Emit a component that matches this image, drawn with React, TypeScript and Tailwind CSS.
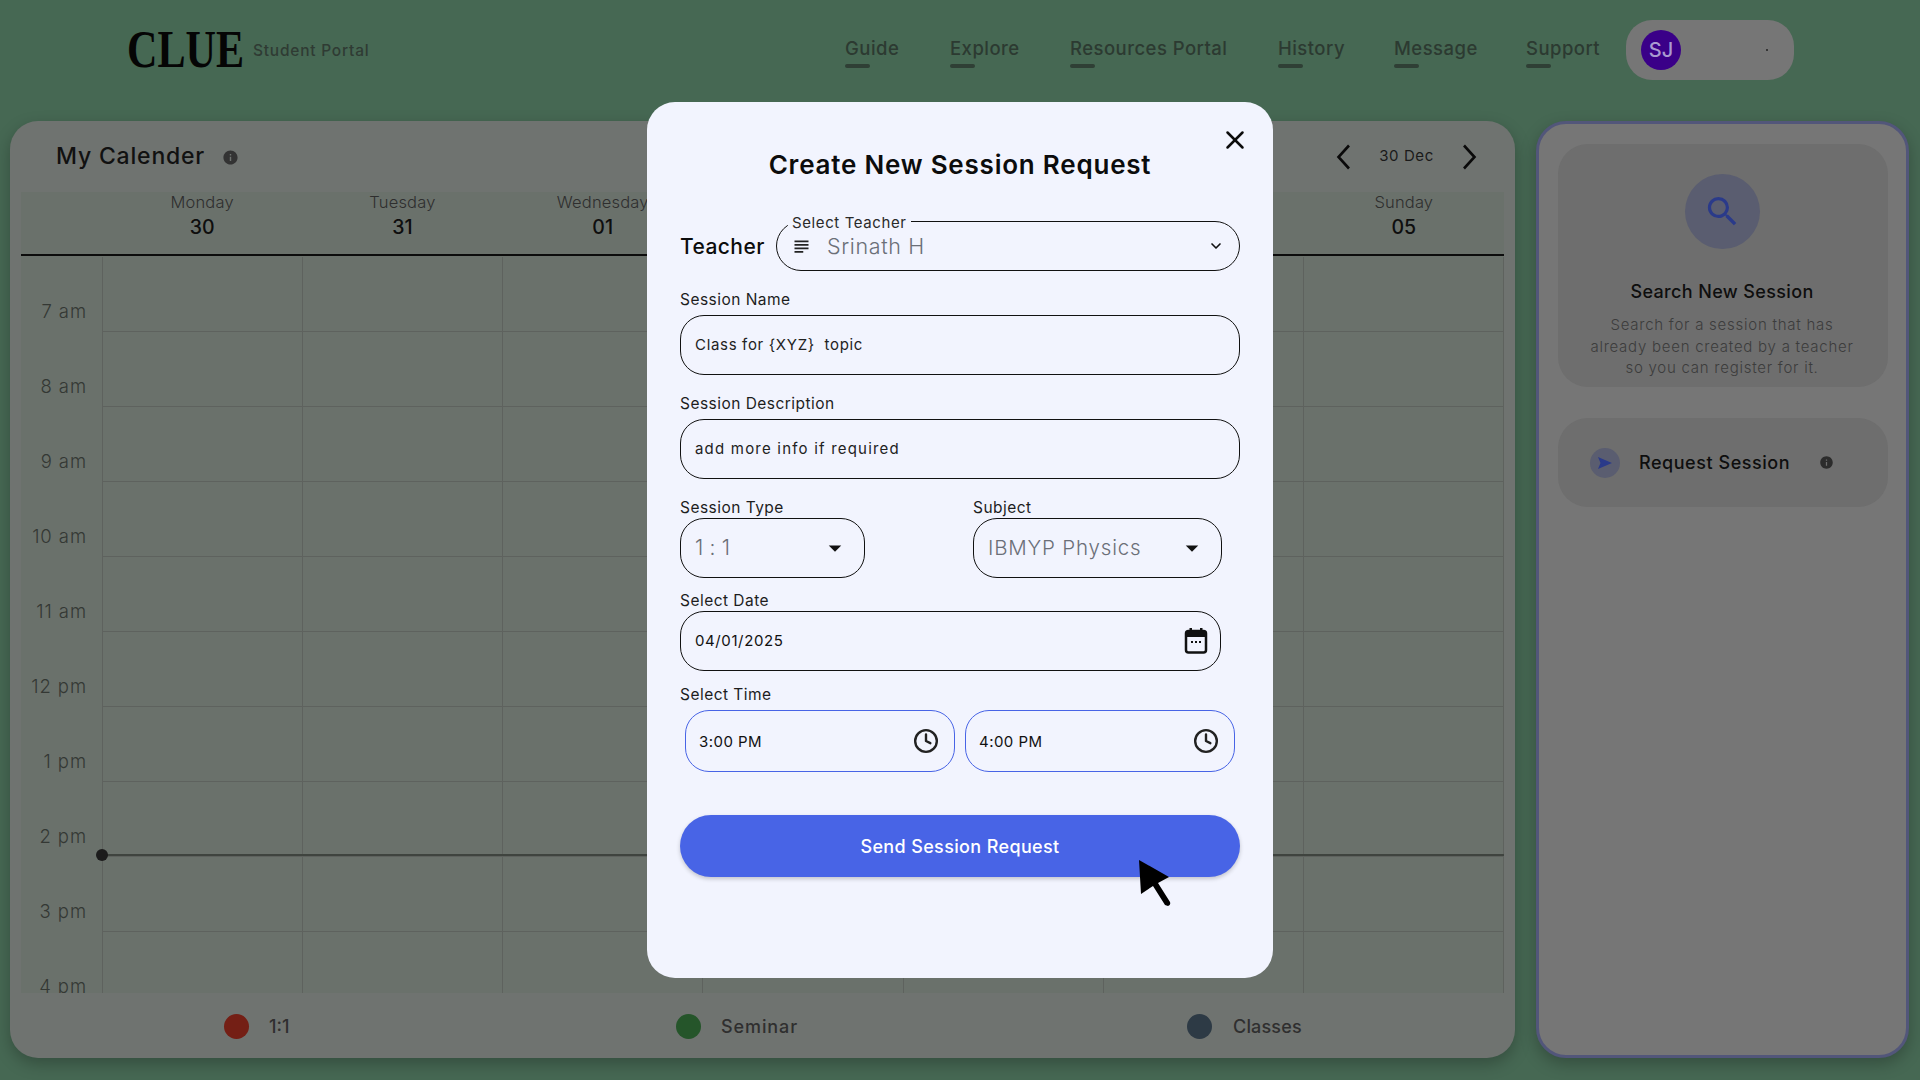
import React from "react";
import { X, ChevronDown, Clock } from "lucide-react";
import { MdInfo, MdSubject, MdArrowDropDown, MdSearch } from "react-icons/md";

const days = [["Monday", "30"], ["Tuesday", "31"], ["Wednesday", "01"], ["Thursday", "02"], ["Friday", "03"], ["Saturday", "04"], ["Sunday", "05"]];
const times = ["7 am", "8 am", "9 am", "10 am", "11 am", "12 pm", "1 pm", "2 pm", "3 pm", "4 pm"];
const nav: [string, string][] = [["Guide", "w-[105px]"], ["Explore", "w-[120px]"], ["Resources Portal", "w-[208px]"], ["History", "w-[116px]"], ["Message", "w-[132px]"], ["Support", "w-[100px]"]];

function Calendar() {
  return (
    <section className="relative w-[1505px] h-[937px] bg-[#6f7370] rounded-[28px] shadow-[0_6px_16px_rgba(0,0,0,0.25)] flex flex-col overflow-hidden">
      <div className="h-[71px] flex items-center pl-[46px] pr-[38px] shrink-0">
        <span className="text-[23px] font-medium text-[#111] tracking-[0.035em]">My Calender</span>
        <MdInfo className="ml-[17px] text-[#333] mt-[1px]" size={17} />
        <div className="ml-auto flex items-center w-[141px] justify-between">
          <svg width="15" height="26" viewBox="0 0 15 26" fill="none" stroke="#0a0a0a" strokeWidth="2.6"><path d="M13 1.5 L2.5 13 L13 24.5" /></svg>
          <span className="text-[15px] text-[#1a1a1a] tracking-[0.04em]">30 Dec</span>
          <svg width="15" height="26" viewBox="0 0 15 26" fill="none" stroke="#0a0a0a" strokeWidth="2.6"><path d="M2 1.5 L12.5 13 L2 24.5" /></svg>
        </div>
      </div>
      <div className="mx-[11px] w-[1483px] h-[801px] bg-[#6a716b] flex flex-col overflow-hidden shrink-0 relative">
        <div className="h-[64px] border-b-2 border-[#0c0c0c] flex pl-[81px] shrink-0">
          {days.map(([d, n]) => (
            <div key={d} className="flex-1 text-center -mt-[1px]">
              <div className="text-[16.5px] font-light text-[#2e2e2e] leading-[22px] tracking-[0.01em]">{d}</div>
              <div className="text-[19.5px] font-medium text-[#0e0e0e] leading-[26px] mt-[1px]">{n}</div>
            </div>
          ))}
        </div>
        <div className="mt-[1px] flex flex-col">
          {times.map((t) => (
            <div key={t} className="flex h-[75px] shrink-0">
              <div className="w-[81px] h-full flex items-center justify-end pt-[34px] text-[18.5px] font-light text-[#343834] tracking-[0.05em] whitespace-nowrap shrink-0 pr-[15px]">
                {t}
              </div>
              <div className="border-l border-[#5e625e] flex flex-1">
                {days.map(([d]) => (
                  <div key={d} className="flex-1 h-[75px] border-b border-r border-[#5e625e]" />
                ))}
              </div>
            </div>
          ))}
        </div>
        <div className="absolute left-[81px] right-0 top-[662px] h-[2px] bg-[#3f443f]" />
        <div className="absolute left-[75px] top-[657px] w-[12px] h-[12px] rounded-full bg-[#1c1c1c]" />
      </div>
      <div className="flex-1 flex items-center pt-[2px] text-[18px] text-[#2f2f2f]">
        <span className="ml-[214px] w-[25px] h-[25px] rounded-full bg-[#741f15]" />
        <span className="ml-[20px] w-[407px] font-medium">1:1</span>
        <span className="w-[25px] h-[25px] rounded-full bg-[#25552a]" />
        <span className="ml-[20px] w-[466px] font-medium tracking-[0.05em]">Seminar</span>
        <span className="w-[25px] h-[25px] rounded-full bg-[#2d3a45]" />
        <span className="ml-[21px] font-medium tracking-[0.01em]">Classes</span>
      </div>
    </section>
  );
}

function Sidebar() {
  return (
    <aside className="w-[373px] h-[937px] bg-[#767676] border-[3px] border-[#52567a] rounded-[30px] shadow-[0_6px_16px_rgba(0,0,0,0.25)] pl-[19px] pr-[18px] pt-[20px]">
      <div className="h-[243px] bg-[#6e6e6e] rounded-[30px] flex flex-col items-center pt-[30px]">
        <div className="mr-[2px] w-[75px] h-[75px] rounded-full bg-[#5a5d70] flex items-center justify-center">
          <MdSearch size={39} className="text-[#2a3a8a]" />
        </div>
        <div className="mr-[2px] mt-[30px] text-[18px] font-medium text-[#0e0e0e] tracking-[0.02em] leading-[26px]">Search New Session</div>
        <p className="mr-[2px] mt-[9px] w-[275px] text-center text-[15px] font-light text-[#3c3c3c] leading-[21.5px] tracking-[0.05em]">
          Search for a session that has already been created by a teacher so you can register for it.
        </p>
      </div>
      <div className="mt-[31px] h-[89px] bg-[#6e6e6e] rounded-[30px] flex items-center pl-[32px]">
        <div className="w-[30px] h-[30px] rounded-full bg-[#5a5d70] flex items-center justify-center">
          <svg width="14" height="12" viewBox="0 0 14 12"><path d="M0 0 L14 6 L0 12 L2.5 6 Z" fill="#2a3a8a" /></svg>
        </div>
        <span className="ml-[19px] text-[18px] font-medium text-[#0e0e0e] tracking-[0.03em]">Request Session</span>
        <MdInfo className="ml-[29px] text-[#2c2c2c]" size={15} />
      </div>
    </aside>
  );
}

function Label({ children, className = "" }: { children: React.ReactNode; className?: string }) {
  return <div className={`text-[15.5px] leading-[20px] text-[#1d1d1d] tracking-[0.03em] ${className}`}>{children}</div>;
}

function Field({ children, className = "" }: { children: React.ReactNode; className?: string }) {
  return <div className={`h-[60px] border border-[#111] rounded-[24px] flex items-center pl-[14px] ${className}`}>{children}</div>;
}

function Modal() {
  return (
    <div className="fixed inset-0 flex items-center justify-center">
      <div className="relative w-[626px] h-[876px] bg-[#f2f4fe] rounded-[28px] px-[33px] pt-[44px]">
        <X size={30} strokeWidth={2} className="absolute right-[23px] top-[23px] text-[#0c0c0c]" />
        <h2 className="text-center text-[26px] font-semibold text-[#0c0c0c] leading-[38px] tracking-[0.03em]">Create New Session Request</h2>
        <div className="mt-[37px] flex items-center h-[50px]">
          <span className="mt-[2px] text-[21px] font-medium text-[#0c0c0c] w-[96px] tracking-[0.02em]">Teacher</span>
          <div className="relative w-[464px] h-[50px] border border-[#111] rounded-[25px] flex items-center pl-[14px] pr-[15px]">
            <span className="absolute left-[11px] -top-[7px] h-[16px] flex items-center bg-[#f2f4fe] px-[4px] text-[15px] text-[#2a2a2a] tracking-[0.04em]">Select Teacher</span>
            <MdSubject size={21} className="text-[#222]" />
            <span className="ml-[15px] text-[21.5px] font-light text-[#6b6f78] tracking-[0.03em]">Srinath H</span>
            <ChevronDown size={16} strokeWidth={2.5} className="ml-auto text-[#111]" />
          </div>
        </div>
        <Label className="mt-[19px]">Session Name</Label>
        <Field className="w-[560px] mt-[5px]"><span className="text-[15px] text-[#222] tracking-[0.045em] whitespace-pre">Class for {"{XYZ}"}  topic</span></Field>
        <Label className="mt-[19px]">Session Description</Label>
        <Field className="w-[560px] mt-[5px]"><span className="text-[15px] text-[#222] tracking-[0.08em]">add more info if required</span></Field>
        <div className="mt-[19px] flex">
          <div className="w-[293px]">
            <Label>Session Type</Label>
            <Field className="w-[185px] mt-0 pr-[14px]">
              <span className="text-[21px] font-light text-[#6b6f78] tracking-[0.01em]">1 : 1</span>
              <MdArrowDropDown size={30} className="ml-auto text-[#111]" />
            </Field>
          </div>
          <div>
            <Label>Subject</Label>
            <Field className="w-[249px] mt-0 pr-[14px]">
              <span className="text-[20.5px] font-light text-[#6b6f78] tracking-[0.04em]">IBMYP Physics</span>
              <MdArrowDropDown size={30} className="ml-auto text-[#111]" />
            </Field>
          </div>
        </div>
        <Label className="mt-[13px]">Select Date</Label>
        <Field className="w-[541px] mt-0 pr-[12px]">
          <span className="text-[15px] text-[#111] tracking-[0.04em]">04/01/2025</span>
          <svg className="ml-auto" width="24" height="26" viewBox="0 0 24 26">
            <rect x="2" y="3" width="20" height="21.5" rx="2.5" fill="none" stroke="#111" strokeWidth="2.5" />
            <rect x="2" y="3" width="20" height="6" fill="#111" />
            <rect x="5.5" y="0" width="2.5" height="4" fill="#111" />
            <rect x="16" y="0" width="2.5" height="4" fill="#111" />
            <rect x="7" y="13" width="2" height="2" fill="#111" />
            <rect x="11" y="13" width="2" height="2" fill="#111" />
            <rect x="15" y="13" width="2" height="2" fill="#111" />
          </svg>
        </Field>
        <Label className="mt-[14px]">Select Time</Label>
        <div className="mt-[5px] ml-[5px] flex gap-[10px]">
          {["3:00 PM", "4:00 PM"].map((t) => (
            <div key={t} className="w-[270px] h-[62px] border border-[#4864e6] rounded-[24px] flex items-center pl-[13px] pr-[15px]">
              <span className="mt-[2px] text-[15px] text-[#111] tracking-[0.03em]">{t}</span>
              <Clock size={26} strokeWidth={2.2} className="ml-auto text-[#222]" />
            </div>
          ))}
        </div>
        <button className="relative mt-[43px] w-[560px] h-[62px] rounded-[31px] bg-[#4864e6] text-white text-[18px] font-medium tracking-[0.02em] shadow-[0_2px_4px_rgba(0,0,0,0.2)]">
          Send Session Request
        </button>
        <svg className="absolute left-[491px] top-[757px]" width="34" height="48" viewBox="0 0 34 48">
          <path d="M1 1 L31 18 L20 24 L32 43 Q33 46 30 47 L27 46 L15 27 L3 35 Z" fill="#000" />
        </svg>
      </div>
    </div>
  );
}

export default function App() {
  return (
    <div className="relative w-[1920px] h-[1080px] overflow-hidden bg-[#466853] font-['Inter',sans-serif]">
      <header className="h-[121px] flex items-start pt-[20px] pl-[127px] pr-[126px]">
        <div className="w-[115px] h-[60px] flex items-center">
          <span className="block origin-left scale-x-[0.81] text-[52px] font-bold text-[#050505] font-['Liberation_Serif',serif] leading-none whitespace-nowrap">CLUE</span>
        </div>
        <span className="ml-[11px] h-[60px] pt-[2px] flex items-center text-[15.5px] font-medium text-[#2f3b33] tracking-[0.05em]">Student Portal</span>
        <nav className="ml-auto flex items-center h-[60px]">
          {nav.map(([n, w]) => (
            <div key={n} className={`${w} flex flex-col mt-[2px]`}>
              <span className="text-[18.5px] font-medium text-[#2c3a31] leading-[26px] tracking-[0.025em]">{n}</span>
              <span className="w-[25px] h-[4px] rounded-full bg-[#2f3f35] mt-[3px]" />
            </div>
          ))}
        </nav>
        <div className="w-[168px] h-[60px] rounded-[26px] bg-[#767676] flex items-center pl-[15px]">
          <div className="w-[40px] h-[40px] rounded-full bg-[#3a0088] flex items-center justify-center text-[20px] font-medium text-[#a99ad0]">SJ</div>
          <span className="ml-[85px] w-[2px] h-[2px] rounded-full bg-[#222]" />
        </div>
      </header>
      <main className="flex pl-[10px] gap-[21px]">
        <Calendar />
        <Sidebar />
      </main>
      <Modal />
    </div>
  );
}
